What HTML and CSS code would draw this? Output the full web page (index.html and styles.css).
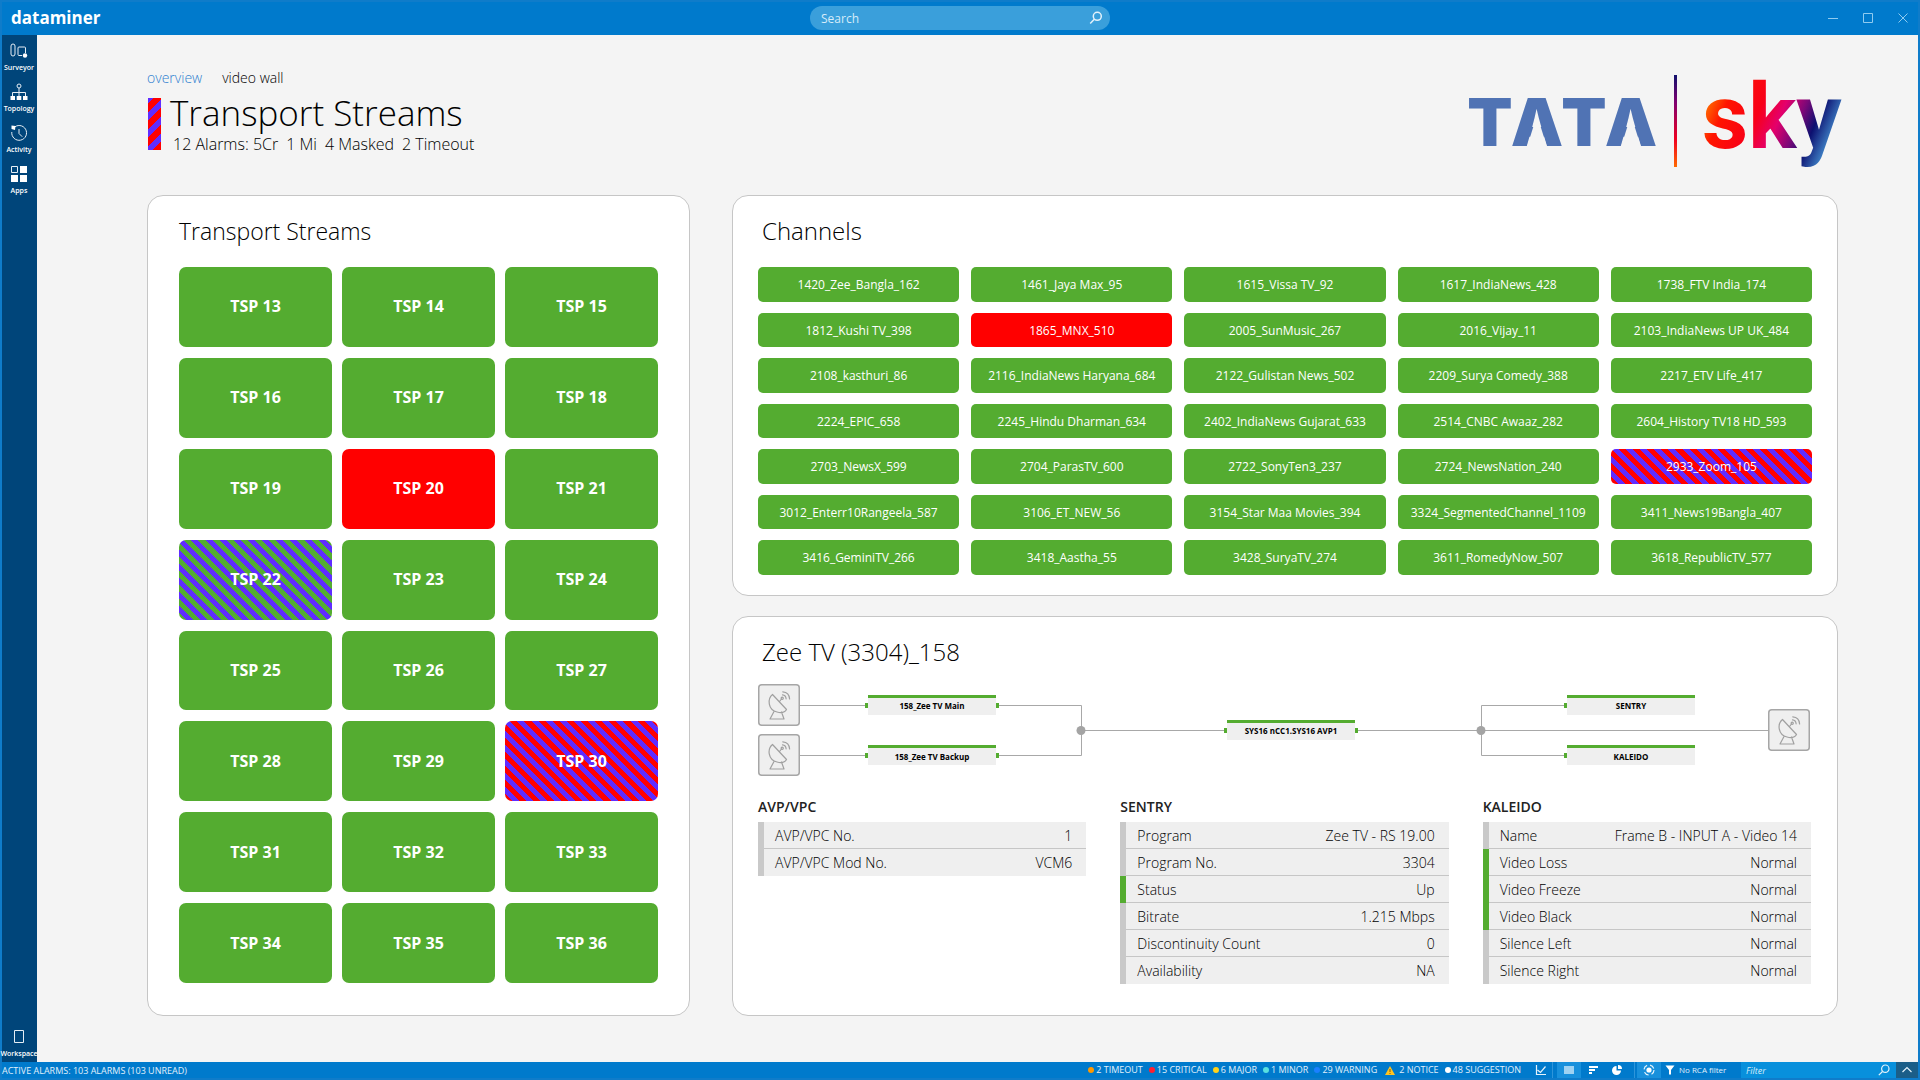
FILE: index.html
```html
<!DOCTYPE html>
<html lang="en">
<head>
<meta charset="utf-8">
<title>dataminer - Transport Streams</title>
<link rel="stylesheet" href="styles.css">
</head>
<body>
<div class="app">
  <header class="topbar">
    <div class="brand">dataminer</div>
    <form class="search">
      <input class="search-input" type="text" placeholder="Search" aria-label="Search">
      <button class="search-button" type="button" aria-label="Run search">
        <svg width="14" height="14" viewBox="0 0 14 14"><circle cx="8.300" cy="5.300" r="4" /><path d="M5.300 8.300L1.200 12.600" /></svg>
      </button>
    </form>
    <div class="window-buttons">
      <button type="button" aria-label="Minimize"><svg width="12" height="12" viewBox="0 0 12 12"><path d="M1 6.500h10" /></svg></button>
      <button type="button" aria-label="Maximize"><svg width="12" height="12" viewBox="0 0 12 12"><path d="M1.500 1.500h9v9h-9z" /></svg></button>
      <button type="button" aria-label="Close"><svg width="12" height="12" viewBox="0 0 12 12"><path d="M1.500 1.500l9 9M10.500 1.500l-9 9" /></svg></button>
    </div>
  </header>

  <div class="body">
    <nav class="sidebar" aria-label="Modules">
      <a class="side-item" href="#surveyor">
        <svg width="18" height="18" viewBox="0 0 18 18"><rect x="1" y="2" width="4" height="12" rx="2" /><path d="M9 5h5.500q1 0 1 1v5M12 13.500H9q-1 0-1-1V6q0-1 1-1" /><circle class="solid" cx="15" cy="13.500" r="2.200" /></svg>
        <span>Surveyor</span>
      </a>
      <a class="side-item" href="#topology">
        <svg width="18" height="18" viewBox="0 0 18 18"><circle cx="9" cy="3" r="2" /><path d="M9 5v9M2.500 13V9.500h13V13" /><path class="solid" d="M.5 13h4.500v4H.5zM6.700 13h4.600v4H6.700zM13 13h4.500v4H13z" /></svg>
        <span>Topology</span>
      </a>
      <a class="side-item" href="#activity">
        <svg width="18" height="18" viewBox="0 0 18 18"><path d="M3.600 4A7.400 7.400 0 1 1 1.800 8M9 5v4.500l3.200 3.200" /><path class="solid" d="M1.500 1.500l4 .5-.5 4-3.500-1z" /></svg>
        <span>Activity</span>
      </a>
      <a class="side-item" href="#apps">
        <svg width="18" height="18" viewBox="0 0 18 18"><path d="M1.500 1.500h6v6h-6z" /><path class="solid" d="M10 1h7v7h-7zM1 10h7v7H1zM10 10h7v7h-7z" /></svg>
        <span>Apps</span>
      </a>
      <a class="side-item side-bottom" href="#workspace">
        <svg width="18" height="18" viewBox="0 0 18 18"><path d="M4.500 2.500h9v12h-9z" /></svg>
        <span>Workspace</span>
      </a>
    </nav>

    <main class="main">
      <div class="page-head">
        <div class="page-info">
          <nav class="tabs" aria-label="Pages">
            <a class="tab tab-active" href="#overview">overview</a>
            <a class="tab" href="#video-wall">video wall</a>
          </nav>
          <div class="heading">
            <div class="heading-mark"></div>
            <div>
              <h1>Transport Streams</h1>
              <p class="summary"><span>12 Alarms: 5Cr</span><span>1 Mi</span><span>4 Masked</span><span>2 Timeout</span></p>
            </div>
          </div>
        </div>
        <svg class="logo" width="376" height="94" viewBox="0 0 376 94" role="img" aria-label="TATA sky">
          <defs>
            <linearGradient id="rule" x1="0" y1="0" x2="0" y2="1"><stop offset="0" stop-color="#10106c"/><stop offset=".3" stop-color="#800070"/><stop offset=".7" stop-color="#f00020"/><stop offset="1" stop-color="#ff6a00"/></linearGradient>
            <linearGradient id="sky" gradientUnits="userSpaceOnUse" x1="236" y1="30" x2="360" y2="84"><stop offset="0" stop-color="#ff7a00"/><stop offset=".16" stop-color="#ff1400"/><stop offset=".4" stop-color="#f80018"/><stop offset=".56" stop-color="#e4006c"/><stop offset=".7" stop-color="#7c0878"/><stop offset=".82" stop-color="#0c1070"/><stop offset="1" stop-color="#4a9ad8"/></linearGradient>
          </defs>
          <text class="logo-tata" x="23 70 117 164" y="72">TATA</text>
          <path class="logo-gap" d="M70 41L80 73H60zM164 41L174 73H154z"/>
          <rect x="207" y="1" width="3" height="92" fill="url(#rule)"/>
          <text class="logo-sky" x="235" y="74" fill="url(#sky)">sky</text>
        </svg>
      </div>

      <div class="panels">
        <section class="panel panel-streams">
          <h2>Transport Streams</h2>
          <div class="streams">
            <button type="button" class="tile">TSP 13</button><button type="button" class="tile">TSP 14</button><button type="button" class="tile">TSP 15</button>
            <button type="button" class="tile">TSP 16</button><button type="button" class="tile">TSP 17</button><button type="button" class="tile">TSP 18</button>
            <button type="button" class="tile">TSP 19</button><button type="button" class="tile critical">TSP 20</button><button type="button" class="tile">TSP 21</button>
            <button type="button" class="tile masked">TSP 22</button><button type="button" class="tile">TSP 23</button><button type="button" class="tile">TSP 24</button>
            <button type="button" class="tile">TSP 25</button><button type="button" class="tile">TSP 26</button><button type="button" class="tile">TSP 27</button>
            <button type="button" class="tile">TSP 28</button><button type="button" class="tile">TSP 29</button><button type="button" class="tile masked-critical">TSP 30</button>
            <button type="button" class="tile">TSP 31</button><button type="button" class="tile">TSP 32</button><button type="button" class="tile">TSP 33</button>
            <button type="button" class="tile">TSP 34</button><button type="button" class="tile">TSP 35</button><button type="button" class="tile">TSP 36</button>
          </div>
        </section>

        <section class="panel">
          <h2>Channels</h2>
          <div class="channels">
            <button type="button" class="channel">1420_Zee_Bangla_162</button>
            <button type="button" class="channel">1461_Jaya Max_95</button>
            <button type="button" class="channel">1615_Vissa TV_92</button>
            <button type="button" class="channel">1617_IndiaNews_428</button>
            <button type="button" class="channel">1738_FTV India_174</button>
            <button type="button" class="channel">1812_Kushi TV_398</button>
            <button type="button" class="channel critical">1865_MNX_510</button>
            <button type="button" class="channel">2005_SunMusic_267</button>
            <button type="button" class="channel">2016_Vijay_11</button>
            <button type="button" class="channel">2103_IndiaNews UP UK_484</button>
            <button type="button" class="channel">2108_kasthuri_86</button>
            <button type="button" class="channel">2116_IndiaNews Haryana_684</button>
            <button type="button" class="channel">2122_Gulistan News_502</button>
            <button type="button" class="channel">2209_Surya Comedy_388</button>
            <button type="button" class="channel">2217_ETV Life_417</button>
            <button type="button" class="channel">2224_EPIC_658</button>
            <button type="button" class="channel">2245_Hindu Dharman_634</button>
            <button type="button" class="channel">2402_IndiaNews Gujarat_633</button>
            <button type="button" class="channel">2514_CNBC Awaaz_282</button>
            <button type="button" class="channel">2604_History TV18 HD_593</button>
            <button type="button" class="channel">2703_NewsX_599</button>
            <button type="button" class="channel">2704_ParasTV_600</button>
            <button type="button" class="channel">2722_SonyTen3_237</button>
            <button type="button" class="channel">2724_NewsNation_240</button>
            <button type="button" class="channel masked-critical">2933_Zoom_105</button>
            <button type="button" class="channel">3012_Enterr10Rangeela_587</button>
            <button type="button" class="channel">3106_ET_NEW_56</button>
            <button type="button" class="channel">3154_Star Maa Movies_394</button>
            <button type="button" class="channel">3324_SegmentedChannel_1109</button>
            <button type="button" class="channel">3411_News19Bangla_407</button>
            <button type="button" class="channel">3416_GeminiTV_266</button>
            <button type="button" class="channel">3418_Aastha_55</button>
            <button type="button" class="channel">3428_SuryaTV_274</button>
            <button type="button" class="channel">3611_RomedyNow_507</button>
            <button type="button" class="channel">3618_RepublicTV_577</button>
          </div>
        </section>

        <section class="panel panel-service">
          <h2>Zee TV (3304)_158</h2>
          <svg class="chain" viewBox="0 0 1053 92">
            <defs>
              <symbol id="dish" viewBox="0 0 42 42">
                <rect x=".75" y=".75" width="40.500" height="40.500" rx="3" fill="#efefef" stroke="#a6a6a6" stroke-width="1.500"/>
                <g fill="none" stroke="#a0a0a0" stroke-width="1.200" stroke-linejoin="round" stroke-linecap="round">
                  <path d="M14.500 10.500C9 15 10 26 19 28c4 1 8 .2 9.500-2.500zM16 27.500L12 35h14l-2.500-7M21.500 17.500l2-2.500"/>
                  <circle cx="24.200" cy="14.200" r="1.100"/>
                  <path d="M24.500 10.800q3.400.3 3.600 4M24.800 7.800q6.400.4 6.800 7.200"/>
                </g>
              </symbol>
            </defs>
            <path class="wire" d="M42 21.500H108M240 21.500H323.500V71.500H240M42 71.500H108M323 46.500H468M599 46.500H1010M806 21.500H723.500V71.500H806"/>
            <circle class="joint" cx="323" cy="46.500" r="4.500"/><circle class="joint" cx="723" cy="46.500" r="4.500"/>
            <use href="#dish" x="0" y="0" width="42" height="42"/>
            <use href="#dish" x="0" y="50" width="42" height="42"/>
            <use href="#dish" x="1010" y="25" width="42" height="42"/>
            <path class="node" d="M110 11h128v20H110zM110 61h128v20H110zM469 36h128v20H469zM809 11h128v20H809zM809 61h128v20H809z"/>
            <path class="node-ok" d="M110 11h128v3H110zM110 61h128v3H110zM469 36h128v3H469zM809 11h128v3H809zM809 61h128v3H809zM107 19h3v5h-3zM238 19h3v5h-3zM107 69h3v5h-3zM238 69h3v5h-3zM466 44h3v5h-3zM597 44h3v5h-3zM806 19h3v5h-3zM806 69h3v5h-3z"/>
            <g class="node-text">
              <text x="174" y="25">158_Zee TV Main</text>
              <text x="174" y="76">158_Zee TV Backup</text>
              <text x="533" y="50">SYS16 nCC1.SYS16 AVP1</text>
              <text x="873" y="25">SENTRY</text>
              <text x="873" y="76">KALEIDO</text>
            </g>
          </svg>
          <div class="tables">
            <table>
              <caption>AVP/VPC</caption>
              <tbody>
                <tr><th scope="row">AVP/VPC No.</th><td>1</td></tr>
                <tr><th scope="row">AVP/VPC Mod No.</th><td>VCM6</td></tr>
              </tbody>
            </table>
            <table>
              <caption>SENTRY</caption>
              <tbody>
                <tr><th scope="row">Program</th><td>Zee TV - RS 19.00</td></tr>
                <tr><th scope="row">Program No.</th><td>3304</td></tr>
                <tr class="ok"><th scope="row">Status</th><td>Up</td></tr>
                <tr><th scope="row">Bitrate</th><td>1.215 Mbps</td></tr>
                <tr><th scope="row">Discontinuity Count</th><td>0</td></tr>
                <tr><th scope="row">Availability</th><td>NA</td></tr>
              </tbody>
            </table>
            <table>
              <caption>KALEIDO</caption>
              <tbody>
                <tr><th scope="row">Name</th><td>Frame B - INPUT A - Video 14</td></tr>
                <tr class="ok"><th scope="row">Video Loss</th><td>Normal</td></tr>
                <tr class="ok"><th scope="row">Video Freeze</th><td>Normal</td></tr>
                <tr class="ok"><th scope="row">Video Black</th><td>Normal</td></tr>
                <tr><th scope="row">Silence Left</th><td>Normal</td></tr>
                <tr><th scope="row">Silence Right</th><td>Normal</td></tr>
              </tbody>
            </table>
          </div>
        </section>
      </div>
    </main>
  </div>

  <footer class="statusbar">
    <div class="status-left">ACTIVE ALARMS: 103 ALARMS (103 UNREAD)</div>
    <ul class="counts">
      <li><i class="dot timeout"></i>2 TIMEOUT</li>
      <li><i class="dot crit"></i>15 CRITICAL</li>
      <li><i class="dot major"></i>6 MAJOR</li>
      <li><i class="dot minor"></i>1 MINOR</li>
      <li><i class="dot warning"></i>29 WARNING</li>
      <li><svg class="notice" width="10" height="9" viewBox="0 0 10 9"><path d="M5 0l5 9H0z" fill="#ffc420"/><path d="M5 3v3M5 7v1" stroke="#7a5a10" stroke-width="1"/></svg>2 NOTICE</li>
      <li><i class="dot suggestion"></i>48 SUGGESTION</li>
    </ul>
    <div class="tools">
      <button type="button" class="tool tool-chart" aria-label="Trend"><svg width="12" height="12" viewBox="0 0 12 12"><path class="line" d="M1.500 1v9.500H11M2.500 6l3 2.500 5-6"/></svg></button>
      <button type="button" class="tool tool-on" aria-label="List"><svg width="12" height="12" viewBox="0 0 12 12"><path class="fill soft" d="M1 2h10v8H1z"/></svg></button>
      <button type="button" class="tool" aria-label="Sort"><svg width="12" height="12" viewBox="0 0 12 12"><path class="fill" d="M2 2h9v2H2zM2 5h6v2H2zM2 8h3v2H2z"/></svg></button>
      <button type="button" class="tool tool-pie" aria-label="Chart"><svg width="12" height="12" viewBox="0 0 12 12"><path class="fill" d="M5.500 2A4.500 4.500 0 1 0 10 6.500H5.500zM7 1v4h4A4 4 0 0 0 7 1z"/></svg></button>
      <button type="button" class="tool tool-on" aria-label="Focus"><svg width="12" height="12" viewBox="0 0 12 12"><circle class="fill" cx="6" cy="6" r="2.600"/><circle class="line ring" cx="6" cy="6" r="5"/></svg></button>
      <button type="button" class="tool-rca"><svg width="10" height="10" viewBox="0 0 10 10"><path class="fill" d="M.5.5h9L6 5v4.500H4V5z"/></svg>No RCA filter</button>
    </div>
    <div class="filter">
      <input class="filter-input" type="text" placeholder="Filter" aria-label="Filter">
      <svg width="12" height="12" viewBox="0 0 12 12"><path class="line" d="M4.500 7.500L.8 11.200"/><circle class="line" cx="7.300" cy="4.700" r="3.700"/></svg>
    </div>
    <button type="button" class="expand" aria-label="Expand"><svg width="12" height="12" viewBox="0 0 12 12"><path class="line" d="M1.500 8L6 3.500 10.500 8"/></svg></button>
  </footer>
</div>
</body>
</html>
```
FILE: styles.css
```css
:root {
  --blue: #007acc;
  --edge: #0f7cca;
  --page: #f4f4f4;
  --green: #54ac30;
  --red: #ff0000;
  --purple: #602cff;
}

* { box-sizing: border-box; }

body {
  margin: 0;
  font-family: "Open Sans", "Noto Sans", sans-serif;
  color: #000;
}

button {
  font: inherit;
  color: inherit;
  border: 0;
  padding: 0;
  background: none;
  cursor: pointer;
}

a { text-decoration: none; color: inherit; }
h1, h2, p { margin: 0; font-weight: 300; }
svg { display: block; flex: none; }

.app {
  min-height: 100vh;
  display: flex;
  flex-direction: column;
  background: var(--page);
  border: 2px solid var(--edge);
}

/* Top bar */
.topbar {
  height: 33px;
  display: grid;
  grid-template-columns: 1fr 300px 1fr;
  align-items: center;
  background: var(--blue);
  color: #fff;
}

.brand {
  padding: 0 0 2px 9px;
  font-size: 17px;
  line-height: 24px;
  font-weight: 700;
}

.search {
  display: flex;
  align-items: center;
  height: 24px;
  padding: 0 7px 0 11px;
  margin-bottom: 2px;
  border-radius: 12px;
  background: #3a9fdb;
}

.search-input {
  flex: 1;
  min-width: 0;
  border: 0;
  padding: 2px 0 0;
  background: none;
  color: #fff;
  font: 12px/20px "Open Sans", "Noto Sans", sans-serif;
}
.search-input::placeholder, .filter-input::placeholder { color: #d6ecf9; opacity: 1; }
.search-button svg { fill: none; stroke: #e4f2fb; stroke-width: 1.5; }

.window-buttons {
  display: flex;
  justify-content: flex-end;
  gap: 23px;
  padding: 0 9px 1px 0;
}
.window-buttons svg { fill: none; stroke: #8fcbf0; stroke-width: 1; }

/* Side bar */
.body { flex: 1; display: flex; }

.sidebar {
  width: 35px;
  display: flex;
  flex-direction: column;
  padding: 7px 1px 2px 0;
  background: #00457a;
  color: #fff;
}

.side-item {
  height: 41px;
  display: flex;
  flex-direction: column;
  align-items: center;
  gap: 3px;
  font-size: 7px;
  line-height: 10px;
  font-weight: 600;
  white-space: nowrap;
}
.side-item svg { fill: none; stroke: #e6eef5; stroke-width: 1; }
.side-item .solid { fill: #fff; stroke: none; }
.side-bottom { height: 32px; margin-top: auto; }

/* Page head */
.main {
  flex: 1;
  min-width: 0;
  display: flex;
  flex-direction: column;
  padding: 31px 80px 46px 110px;
}

.page-head {
  display: flex;
  justify-content: space-between;
  height: 129px;
  margin-right: -5px;
}

.tabs {
  display: flex;
  gap: 20px;
  font-size: 14px;
  line-height: 24px;
  font-weight: 350;
}
.tab-active { color: #2f7fd0; }

.heading { display: flex; gap: 9px; padding: 5px 1px; }
.heading-mark {
  width: 13px;
  height: 52px;
  margin-top: 3px;
  background: repeating-linear-gradient(-45deg, var(--red) 0 6px, var(--purple) 6px 12px);
}

h1 { font-size: 35px; line-height: 36px; white-space: nowrap; }
.summary {
  display: flex;
  gap: 8px;
  padding-left: 3px;
  font-size: 16px;
  line-height: 26px;
  font-weight: 350;
}

.logo { margin-top: 8px; overflow: visible; }
.logo-tata { font: 900 66px Inter, sans-serif; fill: #5073b4; text-anchor: middle; }
.logo-gap { fill: var(--page); }
.logo-sky { font: 700 90px Roboto, sans-serif; }

/* Panels */
.panels {
  flex: 1;
  display: grid;
  grid-template-columns: 543fr 1106fr;
  grid-template-rows: 1fr 1fr;
  gap: 20px 42px;
}

.panel {
  display: flex;
  flex-direction: column;
  min-width: 0;
  padding: 17px 25px 20px;
  border: 1px solid #c6c6c6;
  border-radius: 16px;
  background: #fff;
}
.panel-streams { grid-row: 1 / 3; padding: 17px 31px 32px; }
.panel-service { padding-right: 26px; }

h2 {
  padding-left: 4px;
  margin-bottom: 18px;
  font-size: 24px;
  line-height: 36px;
}
.panel-streams h2 { padding-left: 0; font-size: 23px; }

.streams {
  flex: 1;
  display: grid;
  grid-template-columns: repeat(3, 1fr);
  grid-auto-rows: 1fr;
  gap: 11px 10px;
}
.channels {
  flex: 1;
  display: grid;
  grid-template-columns: repeat(5, 1fr);
  grid-auto-rows: 1fr;
  gap: 11px 12px;
}

.tile, .channel { background: var(--green); color: #fff; }
.tile { padding-bottom: 1px; border-radius: 7px; font-size: 16px; font-weight: 700; }
.channel { padding-top: 1px; border-radius: 5px; font-size: 12px; white-space: nowrap; }
.critical { background: var(--red); }
.masked { background: repeating-linear-gradient(45deg, var(--green) 0 5px, var(--purple) 5px 10px); }
.masked-critical { background: repeating-linear-gradient(45deg, var(--red) 0 5px, var(--purple) 5px 10px); }

/* Signal chain */
.chain { width: 100%; margin-top: -4px; }
.wire { fill: none; stroke: #a8a8a8; stroke-width: 1; }
.joint { fill: #a4a4a4; }
.node { fill: #efefef; }
.node-ok { fill: var(--green); }
.node-text { font-size: 8px; font-weight: 700; text-anchor: middle; }

/* Property tables */
.tables {
  display: grid;
  grid-template-columns: repeat(3, 1fr);
  align-items: start;
  gap: 34px;
  margin-top: 18px;
}

table { width: 100%; border-collapse: collapse; font-size: 14px; line-height: 24px; }
caption { padding-bottom: 2px; text-align: left; font-size: 14px; line-height: 26px; font-weight: 600; color: #222; }
tr { background: #efefef; }
tr + tr th, tr + tr td { border-top: 1px solid #c6c6c6; }
th, td { height: 27px; padding: 2px 0 0; font-weight: 350; }
th { padding-left: 11px; text-align: left; border-left: 6px solid #c9c9c9; }
td { padding-right: 14px; text-align: right; }
.ok th { border-left-color: var(--green); }

/* Status bar */
.statusbar {
  height: 16px;
  display: flex;
  align-items: stretch;
  background: var(--blue);
  color: #e0f0fb;
  font-size: 9px;
  line-height: 18px;
  white-space: nowrap;
}
.status-left { flex: 1; }

.counts { display: flex; gap: 6px; margin: 0; padding: 0; list-style: none; }
.counts li { display: flex; align-items: center; gap: 2px; }
.dot { width: 6px; height: 6px; border-radius: 50%; }
.notice { margin: 0 2px; }
.timeout { background: #ff9800; }
.crit { background: #ff2030; }
.major { background: #ffd21a; }
.minor { background: #58e0e0; }
.warning { background: #1a80ff; }
.suggestion { background: #fff; }

.tools { display: flex; margin-left: 8px; }
.tool { width: 24px; display: flex; align-items: center; justify-content: center; }
.tool-on { background: #1890dc; }
.tool-chart { margin-right: 4px; border-right: 1px solid #2e95da; }
.tool-pie { width: 30px; padding-left: 6px; margin-right: 2px; justify-content: flex-start; border-right: 1px solid #2e95da; }
.tool-rca { width: 76px; display: flex; align-items: center; gap: 4px; margin-left: 4px; font-size: 8px; }
.fill { fill: #fff; }
.soft { fill: #9fd2f2; }
.line { fill: none; stroke: #e4f2fb; stroke-width: 1.2; }
.ring { stroke-dasharray: 5 3; }

.filter {
  width: 155px;
  display: flex;
  align-items: center;
  padding: 0 6px 0 5px;
  background: #0890dc;
}
.filter-input {
  flex: 1;
  min-width: 0;
  border: 0;
  padding: 1px 0 0;
  background: none;
  color: #fff;
  font: italic 9px/14px "Open Sans", "Noto Sans", sans-serif;
}
.expand { width: 22px; display: flex; align-items: center; justify-content: center; background: #1b5e88; }
```
